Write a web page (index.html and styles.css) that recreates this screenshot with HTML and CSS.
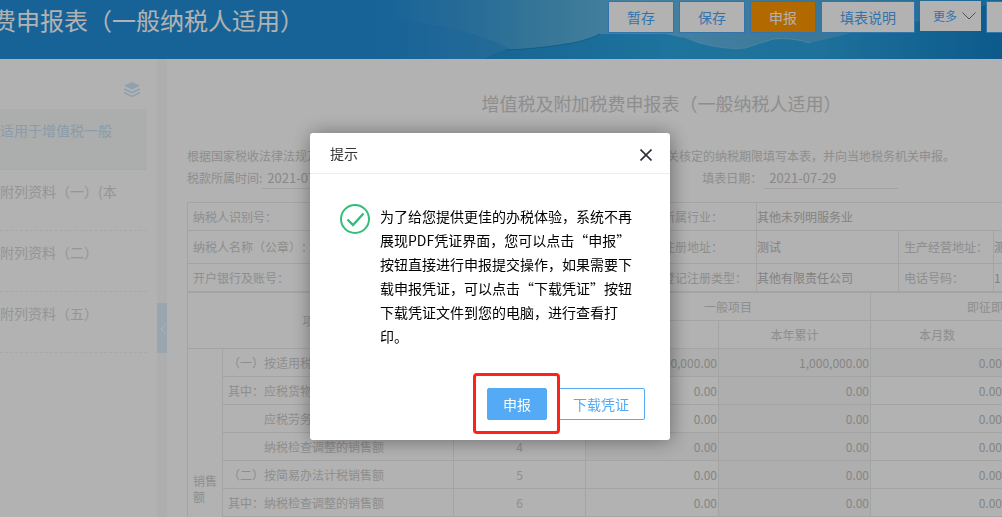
FILE: index.html
```html
<!DOCTYPE html>
<html lang="zh-CN">
<head>
    <meta charset="UTF-8">
    <meta name="viewport" content="width=device-width, initial-scale=1.0">
    <title>增值税及附加税费申报表</title>
    <link rel="stylesheet" href="styles.css">
</head>
<body>

<header class="topbar">
    <svg class="topbar-bg" viewBox="0 0 622 59" preserveAspectRatio="none" aria-hidden="true">
        <defs>
            <linearGradient id="sky" x1="0" y1="0" x2="1" y2="0">
                <stop offset="0" stop-color="#228fd9"/>
                <stop offset="0.15" stop-color="#3a9cd8"/>
                <stop offset="0.3" stop-color="#55aeda"/>
                <stop offset="0.42" stop-color="#66bae8"/>
                <stop offset="0.75" stop-color="#4ea9db"/>
                <stop offset="1" stop-color="#1e93d6"/>
            </linearGradient>
            <linearGradient id="sea" x1="0" y1="0" x2="1" y2="0">
                <stop offset="0" stop-color="#2290d2"/>
                <stop offset="0.35" stop-color="#2ba6e2"/>
                <stop offset="0.65" stop-color="#2ba2de"/>
                <stop offset="1" stop-color="#1382c8"/>
            </linearGradient>
        </defs>
        <rect width="622" height="59" fill="url(#sky)"/>
        <path d="M0 18 Q90 26 132 50 L105 59 H0 Z" fill="#228fd9" opacity="0.4"/>
        <path d="M105 59 Q115 52 125 50 Q155 49 180 45 Q205 42 220 34 L288 34 Q305 36 320 43 Q345 50 365 48 Q380 43 393 39 Q412 37 430 43 Q450 38 475 32 Q560 20 622 0 V59 Z" fill="url(#sea)"/>
        <path d="M125 50 Q155 49 180 45 Q205 42 220 34" fill="none" stroke="#1b86c4"/>
        <path d="M288 34 Q305 36 320 43 Q345 50 365 48 Q380 43 393 39 Q412 37 430 43" fill="none" stroke="#68bfe8"/>
    </svg>
    <h1>费申报表（一般纳税人适用）</h1>
    <div class="toolbar">
        <button>暂存</button>
        <button>保存</button>
        <button class="active">申报</button>
        <button>填表说明</button>
        <button class="more">更多
            <svg width="14" height="8" viewBox="0 0 14 8"><path d="M0.5 0.5 L7 7 L13.5 0.5" fill="none" stroke="#777" stroke-width="1"/></svg>
        </button>
        <button class="last" aria-label="关闭"></button>
    </div>
</header>

<div class="layout">
    <nav class="sidebar">
        <div class="sidebar-head">
            <svg width="16" height="16" viewBox="0 0 16 16">
                <path d="M8 0 L16 3.8 L8 7.6 L0 3.8 Z" fill="#d0e6fa"/>
                <path d="M0 7 L8 10.6 L16 7 M0 10.6 L8 14.4 L16 10.6" fill="none" stroke="#d0e6fa" stroke-width="1.7"/>
            </svg>
        </div>
        <a href="#" class="current">适用于增值税一般</a>
        <a href="#">附列资料（一）(本</a>
        <a href="#">附列资料（二）</a>
        <a href="#">附列资料（五）</a>
    </nav>
    <div class="splitter">
        <button aria-label="收起">
            <svg width="6" height="10" viewBox="0 0 6 10"><path d="M5.5 0.5 L1 5 L5.5 9.5" fill="none" stroke="#fff"/></svg>
        </button>
    </div>

    <main class="sheet">
        <h2>增值税及附加税费申报表（一般纳税人适用）</h2>
        <p class="note">根据国家税收法律法规及增值税相关规定制定本表。纳税人不论有无销售额，均应按税务机关核定的纳税期限填写本表，并向当地税务机关申报。</p>
        <div class="dates">
            <label for="period">税款所属时间:</label>
            <input type="text" id="period" class="period" value="2021-07-01">
            <label for="fillDate">填表日期：</label>
            <input type="text" id="fillDate" value="2021-07-29">
        </div>

        <table class="info">
            <colgroup><col class="w1"><col class="w2"><col class="w3"><col class="w4"><col class="w5"><col></colgroup>
            <tr><th>纳税人识别号：</th><td></td><th>所属行业：</th><td colspan="3">其他未列明服务业</td></tr>
            <tr class="tall"><th>纳税人名称（公章）：</th><td></td><th>注册地址：</th><td>测试</td><th>生产经营地址：</th><td>测试</td></tr>
            <tr><th>开户银行及账号：</th><td></td><th>登记注册类型：</th><td>其他有限责任公司</td><th>电话号码：</th><td>1</td></tr>
        </table>

        <table class="data">
            <colgroup><col class="c1"><col class="c2"><col class="c3"><col class="c4"><col class="c5"><col class="c6"><col></colgroup>
            <tr><th colspan="2" rowspan="2">项　目</th><th rowspan="2">栏次</th><th colspan="2">一般项目</th><th colspan="2">即征即退项目</th></tr>
            <tr><th>本月数</th><th>本年累计</th><th>本月数</th><th>本年累计</th></tr>
            <tr><td rowspan="10" class="group">销售额</td><td>（一）按适用税率计税销售额</td><td class="no">1</td><td class="num ro">1,000,000.00</td><td class="num ro">1,000,000.00</td><td class="num ro">0.00</td><td></td></tr>
            <tr><td>其中：应税货物销售额</td><td class="no">2</td><td class="num">0.00</td><td class="num ro">0.00</td><td class="num">0.00</td><td></td></tr>
            <tr><td class="indent">应税劳务销售额</td><td class="no">3</td><td class="num">0.00</td><td class="num ro">0.00</td><td class="num">0.00</td><td></td></tr>
            <tr><td class="indent">纳税检查调整的销售额</td><td class="no">4</td><td class="num ro">0.00</td><td class="num ro">0.00</td><td class="num">0.00</td><td></td></tr>
            <tr><td>（二）按简易办法计税销售额</td><td class="no">5</td><td class="num">0.00</td><td class="num ro">0.00</td><td class="num">0.00</td><td></td></tr>
            <tr><td>其中：纳税检查调整的销售额</td><td class="no">6</td><td class="num">0.00</td><td class="num ro">0.00</td><td class="num">0.00</td><td></td></tr>
            <tr><td></td><td></td><td></td><td></td><td></td><td></td></tr>
            <tr><td></td><td></td><td></td><td></td><td></td><td></td></tr>
            <tr><td></td><td></td><td></td><td></td><td></td><td></td></tr>
            <tr><td></td><td></td><td></td><td></td><td></td><td></td></tr>
        </table>
    </main>
</div>

<div class="overlay">
    <div class="dialog" role="dialog" aria-labelledby="dialogTitle">
        <div class="dialog-head">
            <span id="dialogTitle">提示</span>
            <button class="close" aria-label="关闭">
                <svg width="12" height="12" viewBox="0 0 12 12"><path d="M0.5 0.5 L11.5 11.5 M11.5 0.5 L0.5 11.5" stroke="#2e2d3c" stroke-width="1.6"/></svg>
            </button>
        </div>
        <div class="dialog-body">
            <svg width="30" height="30" viewBox="0 0 30 30">
                <circle cx="15" cy="15" r="14" fill="none" stroke="#32be78" stroke-width="2"/>
                <path d="M7.5 15.5 L13 21 L23.5 9.5" fill="none" stroke="#32be78" stroke-width="2.4"/>
            </svg>
            <p>为了给您提供更佳的办税体验，系统不再展现PDF凭证界面，您可以点击“申报”按钮直接进行申报提交操作，如果需要下载申报凭证，可以点击“下载凭证”按钮下载凭证文件到您的电脑，进行查看打印。</p>
        </div>
        <div class="dialog-foot">
            <div class="marked"><button class="primary">申报</button></div>
            <button>下载凭证</button>
        </div>
    </div>
</div>

</body>
</html>
```
FILE: styles.css
```css
* {
    box-sizing: border-box;
}
body {
    margin: 0;
    font-family: "Noto Sans CJK SC", sans-serif;
    font-size: 12px;
    color: #ccc;
    background-color: #fff;
    text-spacing-trim: space-all;
}
button, input {
    font-family: inherit;
}
button {
    cursor: pointer;
}

/* top bar */
.topbar {
    position: relative;
    display: flex;
    justify-content: space-between;
    align-items: flex-start;
    height: 59px;
    background-color: #228fd9;
    overflow: hidden;
}
.topbar-bg {
    position: absolute;
    top: 0;
    right: 0;
    width: 622px;
    height: 59px;
}
.topbar h1 {
    position: relative;
    margin: 0 0 0 -8px;
    font-size: 24px;
    font-weight: normal;
    line-height: 40px;
    color: #fff;
    white-space: nowrap;
}
.toolbar {
    position: relative;
    display: flex;
    gap: 5px;
    flex: none;
    margin-right: -50px;
    padding-top: 1px;
}
.toolbar button {
    height: 32px;
    padding: 0 18px;
    font-size: 14px;
    line-height: 28px;
    color: #4ba6f8;
    background-color: #fff;
    border: 1px solid #4ba6f8;
}
.toolbar .active {
    color: #fff;
    background-color: #ff9900;
}
.toolbar .more {
    display: flex;
    gap: 5px;
    align-items: center;
    height: 30px;
    padding: 0 5px 0 13px;
    font-size: 12px;
    border: 0;
}
.toolbar .last {
    width: 66px;
}

/* page columns */
.layout {
    display: grid;
    grid-template-columns: 157px 10px 1fr;
    height: calc(100vh - 59px);
    overflow: hidden;
}
.sidebar {
    padding-right: 10px;
}
.sidebar-head {
    display: flex;
    justify-content: flex-end;
    height: 50px;
    padding: 23px 7px 0 0;
}
.sidebar a {
    display: block;
    height: 61px;
    padding-top: 10px;
    font-size: 14px;
    line-height: 22px;
    color: #d6d6d6;
    text-decoration: none;
    white-space: nowrap;
    border-bottom: 1px dashed #f1f1f1;
}
.sidebar .current {
    color: #c8def2;
    background-color: #f5faf8;
}
.splitter {
    padding-top: 244px;
    background-color: #fafafa;
}
.splitter button {
    display: block;
    width: 10px;
    height: 50px;
    padding: 0 0 0 2px;
    background-color: #dcedfb;
    border: 0;
}

/* form sheet */
.sheet {
    min-width: 0;
    padding: 0 20px;
    overflow: hidden;
}
.sheet h2 {
    width: 949px;
    margin: 31px 0 0;
    font-size: 18px;
    font-weight: normal;
    line-height: 26px;
    text-align: center;
}
.note {
    margin: 29px 0 0;
    line-height: 22px;
    white-space: nowrap;
}
.dates {
    display: flex;
    width: 949px;
    line-height: 22px;
}
.dates input {
    width: 134px;
    height: 22px;
    margin-left: 2px;
    padding: 0 5px;
    font-size: 13px;
    color: #c4c4c4;
    background: none;
    border: 0;
    border-bottom: 1px solid #e8e8e8;
}
.dates .period {
    width: 300px;
    margin: 0 140px 0 0;
}

/* tables */
table {
    width: 949px;
    border-collapse: collapse;
    table-layout: fixed;
}
th, td {
    height: 28px;
    padding: 0 5px;
    font-weight: normal;
    line-height: 16px;
    border: 1px solid #ebebeb;
}
.info {
    margin-top: 13px;
}
.info th {
    text-align: left;
    white-space: nowrap;
}
.info td {
    padding: 0;
    color: #bbb;
}
.info .tall th {
    height: 33px;
}
.w1 { width: 133px; }
.w2 { width: 337px; }
.w3 { width: 99px; }
.w4 { width: 142px; }
.w5 { width: 95px; }
.c1 { width: 35px; }
.c2 { width: 231px; }
.c3 { width: 132px; }
.c4 { width: 133px; }
.c5 { width: 152px; }
.c6 { width: 133px; }
.data .no {
    text-align: center;
}
.data .num {
    padding: 0 1px;
    color: #c0c0c0;
    text-align: right;
}
.data .ro {
    background-color: #fafafa;
}
.data .indent {
    padding-left: 41px;
}

/* dialog */
.overlay {
    position: fixed;
    inset: 0;
    display: flex;
    align-items: center;
    justify-content: center;
    padding: 56px 22px 0 0;
    background-color: rgba(0, 0, 0, 0.3);
}
.dialog {
    width: 360px;
    font-size: 14px;
    color: #000;
    background-color: #fff;
    border-radius: 3px;
    box-shadow: 1px 1px 20px rgba(0, 0, 0, 0.4);
}
.dialog-head {
    display: flex;
    justify-content: space-between;
    align-items: center;
    height: 41px;
    padding: 0 18px 0 20px;
    color: #333;
    border-bottom: 1px solid #eee;
}
.close {
    display: flex;
    padding: 4px 0 0;
    background: none;
    border: 0;
}
.dialog-body {
    display: flex;
    gap: 10px;
    padding: 30px 36px 0 30px;
}
.dialog-body svg {
    flex: none;
}
.dialog-body p {
    margin: 0;
    line-height: 24px;
}
.dialog-foot {
    display: flex;
    justify-content: flex-end;
    gap: 10px;
    padding: 40px 25px 20px;
}
.dialog-foot button {
    height: 32px;
    padding: 0 15px;
    font-size: 14px;
    color: #54aaf4;
    background-color: #fff;
    border: 1px solid #54aaf4;
    border-radius: 2px;
}
.dialog-foot .primary {
    color: #fff;
    background-color: #54aaf4;
}
.marked {
    position: relative;
}
.marked::after {
    content: "";
    position: absolute;
    inset: -15px -13px -14px -14px;
    border: 3px solid #ff2216;
    border-radius: 4px;
    z-index: 1;
    pointer-events: none;
}
```
